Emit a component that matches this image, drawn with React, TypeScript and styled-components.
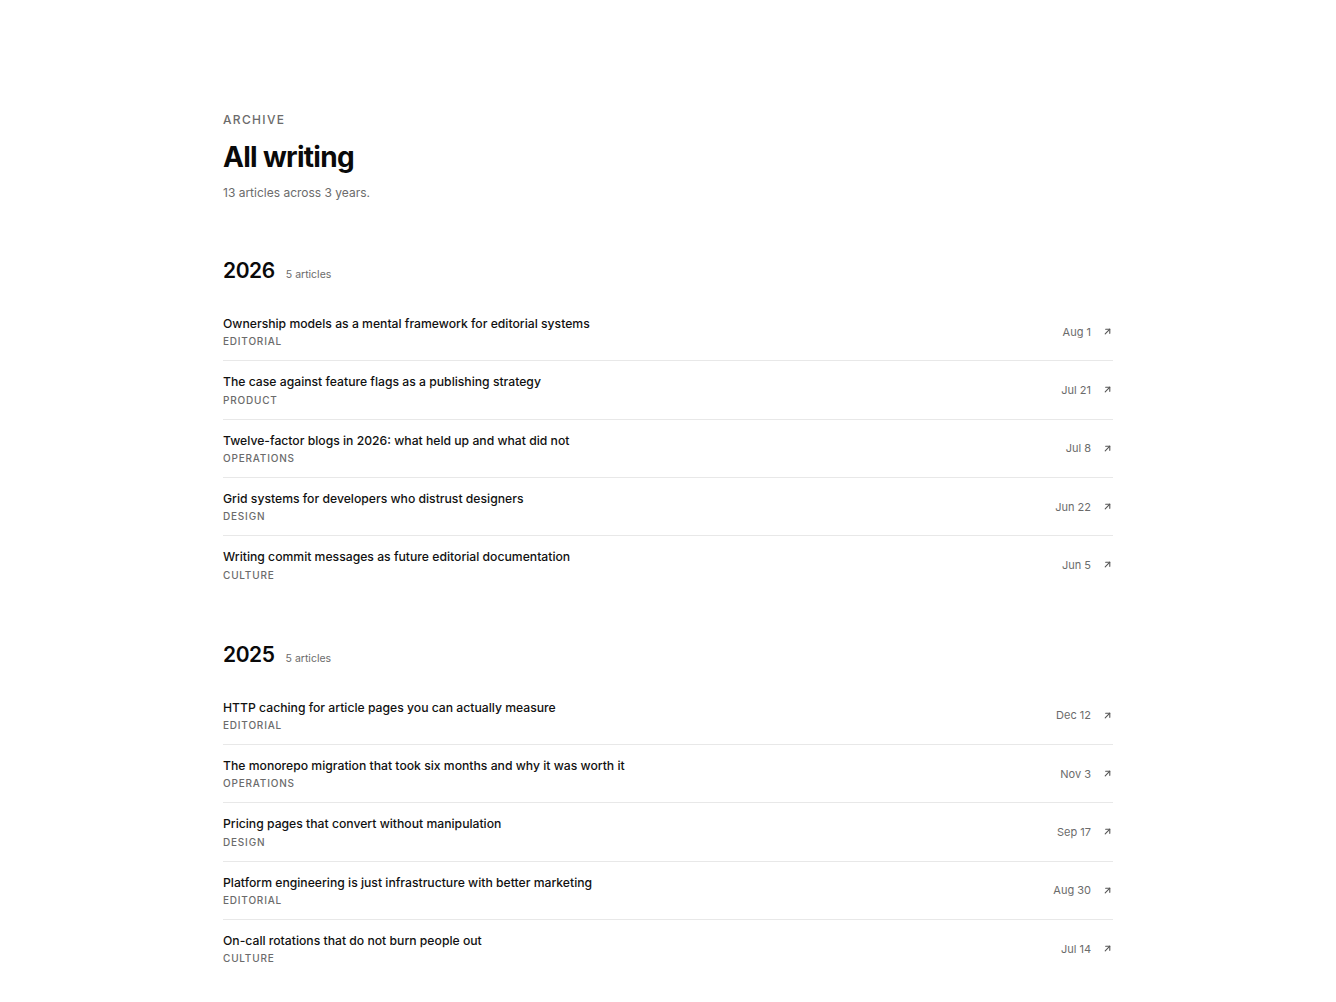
import React from "react";
import styled, { createGlobalStyle } from "styled-components";

const GlobalStyle = createGlobalStyle`
  html, body { margin: 0; padding: 0; background: #ffffff; }
  body {
    font-family: Inter, "Noto Sans", "Liberation Sans", sans-serif;
    color: #111111;
    -webkit-font-smoothing: antialiased;
  }
`;

type Article = { title: string; category: string; date: string };
type Year = { year: string; articles: Article[] };

const years: Year[] = [
  {
    year: "2026",
    articles: [
      { title: "Ownership models as a mental framework for editorial systems", category: "Editorial", date: "Aug 1" },
      { title: "The case against feature flags as a publishing strategy", category: "Product", date: "Jul 21" },
      { title: "Twelve-factor blogs in 2026: what held up and what did not", category: "Operations", date: "Jul 8" },
      { title: "Grid systems for developers who distrust designers", category: "Design", date: "Jun 22" },
      { title: "Writing commit messages as future editorial documentation", category: "Culture", date: "Jun 5" },
    ],
  },
  {
    year: "2025",
    articles: [
      { title: "HTTP caching for article pages you can actually measure", category: "Editorial", date: "Dec 12" },
      { title: "The monorepo migration that took six months and why it was worth it", category: "Operations", date: "Nov 3" },
      { title: "Pricing pages that convert without manipulation", category: "Design", date: "Sep 17" },
      { title: "Platform engineering is just infrastructure with better marketing", category: "Editorial", date: "Aug 30" },
      { title: "On-call rotations that do not burn people out", category: "Culture", date: "Jul 14" },
    ],
  },
];

const Page = styled.main`
  max-width: 890px;
  margin: 0 auto;
  padding: 112px 0 64px;
`;

const Header = styled.header`
  display: flex;
  flex-direction: column;
  margin-bottom: 55px;
`;

const Eyebrow = styled.div`
  font-size: 12px;
  line-height: 16px;
  font-weight: 500;
  letter-spacing: 0.11em;
  text-transform: uppercase;
  color: #6b6b6b;
`;

const Title = styled.h1`
  margin: 11px 0 0;
  font-size: 28px;
  line-height: 36px;
  font-weight: 700;
  letter-spacing: -0.025em;
  color: #0a0a0a;
`;

const Subtitle = styled.p`
  margin: 9px 0 0;
  font-size: 12px;
  line-height: 18px;
  color: #6b6b6b;
`;

const Section = styled.section`
  & + & {
    margin-top: 47px;
  }
`;

const YearHeading = styled.div`
  display: flex;
  align-items: baseline;
  gap: 11px;
  margin-bottom: 18px;
`;

const YearLabel = styled.h2`
  margin: 0;
  font-size: 21px;
  line-height: 28px;
  font-weight: 600;
  letter-spacing: -0.02em;
  color: #0a0a0a;
`;

const YearCount = styled.span`
  font-size: 10.5px;
  color: #6b6b6b;
`;

const List = styled.ul`
  list-style: none;
  margin: 0;
  padding: 0;
`;

const Row = styled.li`
  display: flex;
  align-items: center;
  justify-content: space-between;
  gap: 24px;
  padding: 12px 0 11px;
  border-bottom: 1px solid #e8e8e8;
  &:last-child {
    border-bottom: none;
  }
`;

const Main = styled.div`
  display: flex;
  flex-direction: column;
  gap: 1px;
  min-width: 0;
`;

const ArticleTitle = styled.a`
  font-size: 12.2px;
  line-height: 17.33px;
  font-weight: 500;
  color: #111111;
  text-decoration: none;
`;

const Category = styled.span`
  font-size: 10px;
  line-height: 16px;
  font-weight: 500;
  letter-spacing: 0.08em;
  text-transform: uppercase;
  color: #6b6b6b;
`;

const Meta = styled.div`
  display: flex;
  align-items: center;
  gap: 11px;
  flex-shrink: 0;
  margin-top: -1px;
`;

const DateText = styled.time`
  font-size: 11px;
  color: #6b6b6b;
`;

const ArrowIcon = styled.svg`
  width: 11px;
  height: 11px;
  color: #555555;
`;

const Arrow = () => (
  <ArrowIcon viewBox="0 0 24 24" fill="none" stroke="currentColor" strokeWidth={2.4} strokeLinecap="round" strokeLinejoin="round">
    <path d="M7 17 17 7" />
    <path d="M8 7h9v9" />
  </ArrowIcon>
);

export default function App() {
  const total = years.reduce((n, y) => n + y.articles.length, 0) + 3;
  return (
    <>
      <GlobalStyle />
      <Page>
        <Header>
          <Eyebrow>Archive</Eyebrow>
          <Title>All writing</Title>
          <Subtitle>{total} articles across 3 years.</Subtitle>
        </Header>
        {years.map((y) => (
          <Section key={y.year}>
            <YearHeading>
              <YearLabel>{y.year}</YearLabel>
              <YearCount>{y.articles.length} articles</YearCount>
            </YearHeading>
            <List>
              {y.articles.map((a) => (
                <Row key={a.title}>
                  <Main>
                    <ArticleTitle href="#">{a.title}</ArticleTitle>
                    <Category>{a.category}</Category>
                  </Main>
                  <Meta>
                    <DateText>{a.date}</DateText>
                    <Arrow />
                  </Meta>
                </Row>
              ))}
            </List>
          </Section>
        ))}
      </Page>
    </>
  );
}
